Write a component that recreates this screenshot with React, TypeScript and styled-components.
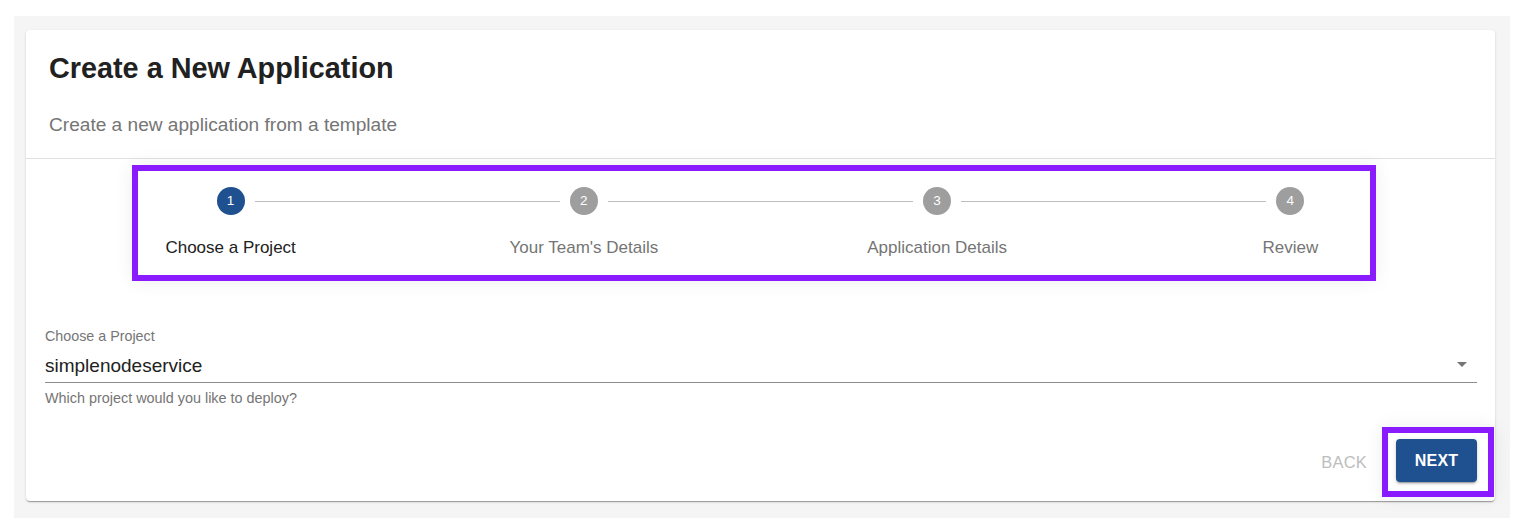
import React from "react";
import styled, { createGlobalStyle } from "styled-components";

const GlobalStyle = createGlobalStyle`
  html, body {
    margin: 0;
    padding: 0;
    background: #ffffff;
  }
  body {
    font-family: "Liberation Sans", Arial, Helvetica, sans-serif;
    -webkit-font-smoothing: antialiased;
  }
`;

const Page = styled.div`
  margin: 16px 16px 10px 14px;
  padding: 14px 15px 17px 12px;
  background: #f5f5f5;
`;

const Card = styled.div`
  background: #ffffff;
  border-radius: 4px;
  box-shadow: 0px 2px 1px -1px rgba(0, 0, 0, 0.2),
    0px 1px 1px 0px rgba(0, 0, 0, 0.14), 0px 1px 3px 0px rgba(0, 0, 0, 0.12);
  display: flex;
  flex-direction: column;
`;

const Header = styled.div`
  padding: 21px 23px 21px 23px;
  display: flex;
  flex-direction: column;
  gap: 28px;
  border-bottom: 1px solid #e0e0e0;
`;

const Title = styled.h1`
  margin: 0;
  font-size: 28.8px;
  line-height: 34px;
  font-weight: 700;
  color: #212121;
`;

const Subtitle = styled.div`
  font-size: 19.1px;
  line-height: 24px;
  color: #757575;
`;

const StepperSection = styled.div`
  position: relative;
  padding: 28px 28px 22px 28px;
`;

const Highlight = styled.div<{ $top: number; $left: number; $w: number; $h: number }>`
  position: absolute;
  top: ${(p) => p.$top}px;
  left: ${(p) => p.$left}px;
  width: ${(p) => p.$w}px;
  height: ${(p) => p.$h}px;
  box-sizing: border-box;
  border: 6px solid #8a1bff;
  box-shadow: 0 0 18px rgba(0, 0, 0, 0.07);
  pointer-events: none;
`;

const Stepper = styled.div`
  display: grid;
  grid-template-columns: repeat(4, 1fr);
`;

const Step = styled.div`
  display: flex;
  flex-direction: column;
  align-items: stretch;
`;

const StepTrack = styled.div`
  display: flex;
  align-items: center;
  gap: 10px;
  height: 28px;
`;

const Connector = styled.div<{ $hidden?: boolean }>`
  flex: 1;
  height: 1px;
  background: ${(p) => (p.$hidden ? "transparent" : "#bdbdbd")};
`;

const StepIcon = styled.div<{ $active?: boolean }>`
  width: 28px;
  height: 28px;
  border-radius: 50%;
  background: ${(p) => (p.$active ? "#1f5190" : "#9e9e9e")};
  color: #ffffff;
  display: flex;
  align-items: center;
  justify-content: center;
  font-size: 13.5px;
  line-height: 1;
  flex: none;
`;

const StepLabel = styled.div<{ $active?: boolean }>`
  margin-top: 23px;
  text-align: center;
  font-size: 17px;
  line-height: 20px;
  color: ${(p) => (p.$active ? "#212121" : "#757575")};
`;

const FormSection = styled.div`
  padding: 48px 18px 0 19px;
  display: flex;
  flex-direction: column;
`;

const FieldLabel = styled.label`
  font-size: 14.3px;
  line-height: 16px;
  color: #757575;
`;

const SelectRow = styled.div`
  margin-top: 10px;
  display: flex;
  align-items: flex-start;
  padding-bottom: 4px;
  border-bottom: 1px solid #8c8c8c;
`;

const SelectValue = styled.div`
  flex: 1;
  font-size: 19px;
  line-height: 24px;
  color: #212121;
`;

const ArrowIcon = styled.svg`
  width: 24px;
  height: 24px;
  margin: -2px 3px 0 0;
  fill: #757575;
  flex: none;
`;

const HelperText = styled.div`
  margin-top: 7px;
  font-size: 14.4px;
  line-height: 16px;
  color: #757575;
`;

const Actions = styled.div`
  margin-top: 21px;
  padding: 0 1px 4px 0;
  display: flex;
  justify-content: flex-end;
  align-items: center;
`;

const TextButton = styled.button`
  border: none;
  background: transparent;
  font-family: inherit;
  font-size: 16.5px;
  font-weight: 400;
  letter-spacing: 0.2px;
  color: #bdbdbd;
  padding: 8px 0;
  margin-right: 15px;
  cursor: default;
`;

const HighlightFrame = styled.div`
  border: 6px solid #8a1bff;
  padding: 6px 11px 9px 8px;
  box-shadow: 0 0 18px rgba(0, 0, 0, 0.07);
  display: flex;
`;

const PrimaryButton = styled.button`
  width: 81px;
  height: 43px;
  border: none;
  border-radius: 4px;
  background: #1f5190;
  color: #ffffff;
  font-family: inherit;
  font-size: 16px;
  font-weight: 700;
  letter-spacing: 0.2px;
  box-shadow: 0px 3px 1px -2px rgba(0, 0, 0, 0.2),
    0px 2px 2px 0px rgba(0, 0, 0, 0.14), 0px 1px 5px 0px rgba(0, 0, 0, 0.12);
  cursor: pointer;
`;

const steps = ["Choose a Project", "Your Team's Details", "Application Details", "Review"];

export default function App() {
  return (
    <>
      <GlobalStyle />
      <Page>
        <Card>
          <Header>
            <Title>Create a New Application</Title>
            <Subtitle>Create a new application from a template</Subtitle>
          </Header>
          <StepperSection>
            <Stepper>
              {steps.map((label, i) => (
                <Step key={label}>
                  <StepTrack>
                    <Connector $hidden={i === 0} />
                    <StepIcon $active={i === 0}>{i + 1}</StepIcon>
                    <Connector $hidden={i === steps.length - 1} />
                  </StepTrack>
                  <StepLabel $active={i === 0}>{label}</StepLabel>
                </Step>
              ))}
            </Stepper>
            <Highlight $top={6} $left={106} $w={1244} $h={116} />
          </StepperSection>
          <FormSection>
            <FieldLabel>Choose a Project</FieldLabel>
            <SelectRow>
              <SelectValue>simplenodeservice</SelectValue>
              <ArrowIcon viewBox="0 0 24 24">
                <path d="M7 10l5 5 5-5z" />
              </ArrowIcon>
            </SelectRow>
            <HelperText>Which project would you like to deploy?</HelperText>
          </FormSection>
          <Actions>
            <TextButton disabled>BACK</TextButton>
            <HighlightFrame>
              <PrimaryButton>NEXT</PrimaryButton>
            </HighlightFrame>
          </Actions>
        </Card>
      </Page>
    </>
  );
}
